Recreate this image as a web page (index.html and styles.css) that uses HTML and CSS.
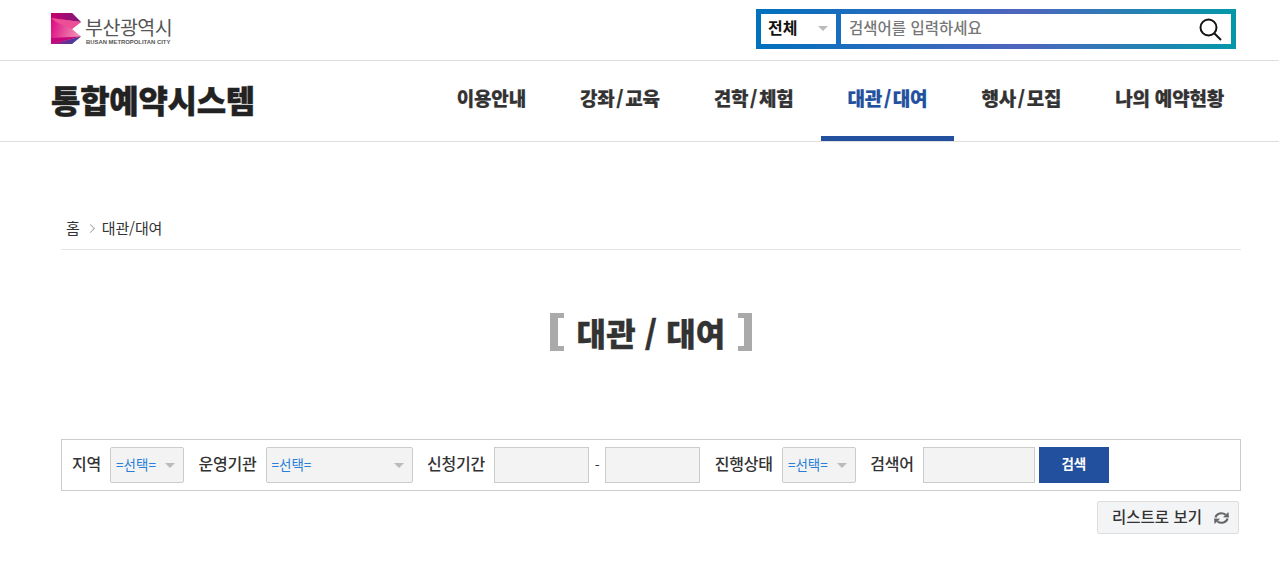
FILE: index.html
```html
<!DOCTYPE html>
<html lang="ko">
<head>
    <meta charset="UTF-8">
    <meta name="viewport" content="width=device-width, initial-scale=1.0">
    <title>통합예약시스템 - 대관/대여</title>
    <link rel="stylesheet" href="styles.css">
</head>
<body>
    <div class="top-bar">
        <a href="#" class="city-logo">
            <svg class="city-mark" width="30" height="31" viewBox="0 0 30 31">
                <defs>
                    <linearGradient id="mark-pink" x1="0" y1="0" x2="1" y2="0.3">
                        <stop offset="0" stop-color="#dc0080"/>
                        <stop offset="1" stop-color="#f08db0"/>
                    </linearGradient>
                    <linearGradient id="mark-dark" x1="0" y1="0" x2="1" y2="0">
                        <stop offset="0" stop-color="#c8006e"/>
                        <stop offset="1" stop-color="#7a1a78"/>
                    </linearGradient>
                    <linearGradient id="mark-blue" x1="0" y1="0" x2="1" y2="0">
                        <stop offset="0" stop-color="#b0107e"/>
                        <stop offset="1" stop-color="#2c49a8"/>
                    </linearGradient>
                </defs>
                <path d="M0 0H21L30 9L21 16L30 23.5L21 31H0Z" fill="url(#mark-pink)"/>
                <path d="M0 0H21L30 9L0 5Z" fill="url(#mark-dark)"/>
                <path d="M0 5L30 9L21 16L5 9Z" fill="#ec4f96"/>
                <path d="M0 31L30 23.5L21 31Z" fill="url(#mark-blue)"/>
                <path d="M0 31V25L30 23.5Z" fill="#c4087c"/>
            </svg>
            <span class="city-name">
                <strong>부산광역시</strong>
                <small>BUSAN METROPOLITAN CITY</small>
            </span>
        </a>
        <form class="top-search">
            <div class="top-search-select">
                <span>전체</span>
                <i class="caret"></i>
            </div>
            <div class="top-search-field">
                <input type="text" placeholder="검색어를 입력하세요">
                <svg width="24" height="24" viewBox="0 0 24 24" fill="none" stroke="#111" stroke-width="2">
                    <circle cx="10.5" cy="10.5" r="8"/>
                    <path d="M16.5 16.5L23 23"/>
                </svg>
            </div>
        </form>
    </div>

    <div class="nav-bar">
        <a href="#" class="site-title">통합예약시스템</a>
        <ul class="gnb">
            <li><a href="#">이용안내</a></li>
            <li><a href="#">강좌<span class="sep">/</span>교육</a></li>
            <li><a href="#">견학<span class="sep">/</span>체험</a></li>
            <li class="active"><a href="#">대관<span class="sep">/</span>대여</a></li>
            <li><a href="#">행사<span class="sep">/</span>모집</a></li>
            <li><a href="#">나의 예약현황</a></li>
        </ul>
    </div>

    <div class="content">
        <div class="breadcrumb">
            <span>홈</span>
            <i class="crumb-arrow"></i>
            <span>대관/대여</span>
        </div>

        <h2 class="page-title">
            <i class="bracket bracket-left"></i>
            <span>대관 / 대여</span>
            <i class="bracket bracket-right"></i>
        </h2>

        <form class="filter">
            <label class="filter-label first">지역</label>
            <div class="select-box small">
                <select><option>=선택=</option></select>
            </div>
            <label class="filter-label">운영기관</label>
            <div class="select-box wide">
                <select><option>=선택=</option></select>
            </div>
            <label class="filter-label">신청기간</label>
            <input type="text" class="text-input date">
            <span class="dash">-</span>
            <input type="text" class="text-input date">
            <label class="filter-label">진행상태</label>
            <div class="select-box small">
                <select><option>=선택=</option></select>
            </div>
            <label class="filter-label">검색어</label>
            <input type="text" class="text-input keyword">
            <button type="button" class="search-btn">검색</button>
        </form>

        <div class="list-actions">
            <a href="#" class="list-btn">
                리스트로 보기
                <svg width="17" height="14" viewBox="0 0 17 14" fill="#666" stroke="none">
                    <path class="refresh-arc" d="M2.5 6.5A6 5.2 0 0 1 12.5 3.6"/>
                    <path d="M10 6.2L16 6.4L15.4 1Z"/>
                    <path class="refresh-arc" d="M14.5 7.5A6 5.2 0 0 1 4.5 10.4"/>
                    <path d="M7 7.8L1 7.6L1.6 13Z"/>
                </svg>
            </a>
        </div>
    </div>
</body>
</html>
```

FILE: styles.css
```css
* {
    box-sizing: border-box;
}
body {
    margin: 0;
    background: #fff;
    color: #333;
    font-family: "Noto Sans CJK KR", "Noto Sans", sans-serif;
    font-size: 14px;
}
a {
    color: inherit;
    text-decoration: none;
}
.top-bar {
    display: flex;
    justify-content: space-between;
    align-items: center;
    height: 61px;
    padding: 0 43px 3px 51px;
    border-bottom: 1px solid #ddd;
}
.city-logo {
    display: flex;
    align-items: center;
    gap: 4px;
}
.city-mark {
    display: block;
}
.city-name {
    display: flex;
    flex-direction: column;
    padding-top: 4px;
    color: #555;
}
.city-name strong {
    font-size: 19.5px;
    font-weight: 400;
    line-height: 22px;
    letter-spacing: -0.5px;
}
.city-name small {
    margin-top: 1px;
    padding-left: 1px;
    font-family: "Liberation Sans", sans-serif;
    font-size: 5.9px;
    font-weight: 700;
    line-height: 7px;
}
.top-search {
    display: flex;
    gap: 5px;
    width: 480px;
    height: 40px;
    padding: 5px;
    background: linear-gradient(90deg, #0071bd 0%, #4f65be 55%, #0398a9 100%);
}
.top-search-select {
    display: flex;
    justify-content: space-between;
    align-items: center;
    width: 75px;
    padding: 0 8px 4px 7px;
    background: #fff;
    color: #111;
    font-size: 16px;
    font-weight: 700;
}
.top-search-select .caret {
    margin-top: 4px;
}
.top-search-field {
    display: flex;
    flex: 1;
    align-items: center;
    padding: 0 9px 0 8px;
    background: #fff;
}
.top-search-field input {
    flex: 1;
    height: 100%;
    border: 0;
    outline: 0;
    padding: 0 0 4px 0;
    font-family: inherit;
    font-size: 15.5px;
    font-weight: 500;
}
.top-search-field input::placeholder {
    color: #777;
}
.caret {
    display: block;
    width: 0;
    height: 0;
    border-top: 5px solid #bbb;
    border-left: 5px solid transparent;
    border-right: 5px solid transparent;
}
.nav-bar {
    display: flex;
    justify-content: space-between;
    align-items: center;
    height: 81px;
    padding: 0 28px 0 51px;
    border-bottom: 1px solid #ddd;
}
.site-title {
    margin-bottom: 4px;
    color: #222;
    font-size: 32px;
    font-weight: 900;
    letter-spacing: -0.3px;
    -webkit-text-stroke: 0.4px #222;
}
.gnb {
    display: flex;
    margin: 0;
    padding: 0;
    list-style: none;
}
.gnb a {
    display: block;
    height: 80px;
    padding: 0 27px;
    color: #333;
    font-size: 19px;
    font-weight: 900;
    line-height: 74px;
    letter-spacing: -0.2px;
    -webkit-text-stroke: 0.2px;
}
.gnb .sep {
    padding: 0 1.75px;
}
.gnb .active a {
    border-bottom: 5px solid #22509e;
    color: #22509e;
}
.content {
    width: 1180px;
    margin-left: 61px;
}
.breadcrumb {
    display: flex;
    align-items: center;
    gap: 8px;
    height: 108px;
    padding: 64px 0 0 5px;
    border-bottom: 1px solid #e5e5e5;
    font-size: 15px;
    letter-spacing: -0.1px;
}
.crumb-arrow {
    display: block;
    width: 7px;
    height: 7px;
    margin: 2px 0 0 -1px;
    border-top: 1px solid #aaa;
    border-right: 1px solid #aaa;
    transform: rotate(45deg) scale(0.9);
}
.page-title {
    display: flex;
    justify-content: center;
    align-items: center;
    gap: 13px;
    height: 36px;
    margin: 64px 0 0 0;
    color: #333;
    font-size: 32px;
    font-weight: 900;
    letter-spacing: 0.1px;
    -webkit-text-stroke: 0.3px #333;
}
.bracket {
    display: block;
    flex: none;
    width: 14px;
    height: 38px;
    border: 5px solid #aaa;
    border-left-width: 8px;
    border-right-width: 8px;
}
.bracket-left {
    border-right: 0;
}
.bracket-right {
    border-left: 0;
}
.filter {
    display: flex;
    align-items: center;
    height: 52px;
    margin-top: 89px;
    padding: 0 10px;
    border: 1px solid #ccc;
}
.filter-label {
    margin: 0 9px 4px 14.4px;
    font-size: 16px;
    font-weight: 500;
    letter-spacing: -0.2px;
}
.filter-label.first {
    margin-left: 0;
}
.select-box {
    position: relative;
    flex: none;
    height: 36px;
}
.select-box.small {
    width: 74px;
}
.select-box.wide {
    width: 147px;
}
.select-box::after {
    content: "";
    position: absolute;
    top: 16px;
    right: 9px;
    width: 0;
    height: 0;
    border-top: 5px solid #bbb;
    border-left: 5px solid transparent;
    border-right: 5px solid transparent;
}
.select-box select {
    width: 100%;
    height: 100%;
    padding: 0 0 3px 5px;
    appearance: none;
    background: #f3f3f3;
    border: 1px solid #ccc;
    border-radius: 2px;
    color: #2b7fd8;
    font-family: inherit;
    font-size: 13.5px;
}
.text-input {
    height: 36px;
    border: 1px solid #ccc;
    background: #f3f3f3;
}
.text-input.date {
    width: 95px;
}
.text-input.keyword {
    width: 112px;
}
.dash {
    width: 16.4px;
    text-align: center;
}
.search-btn {
    width: 70px;
    height: 36px;
    margin-left: 4px;
    padding: 0 0 4px 0;
    border: 0;
    background: #22509e;
    color: #fff;
    font-family: inherit;
    font-size: 13.5px;
    font-weight: 700;
}
.list-actions {
    display: flex;
    justify-content: flex-end;
    padding: 10px 2px 0 0;
}
.list-btn {
    display: flex;
    align-items: center;
    gap: 11px;
    height: 33px;
    padding: 0 8px 3px 14px;
    background: #f3f4f6;
    border: 1px solid #ddd;
    border-radius: 2px;
    font-size: 15.5px;
    font-weight: 500;
}
.list-btn svg {
    margin-top: 4px;
}
.refresh-arc {
    fill: none;
    stroke: #666;
    stroke-width: 2;
}
```
